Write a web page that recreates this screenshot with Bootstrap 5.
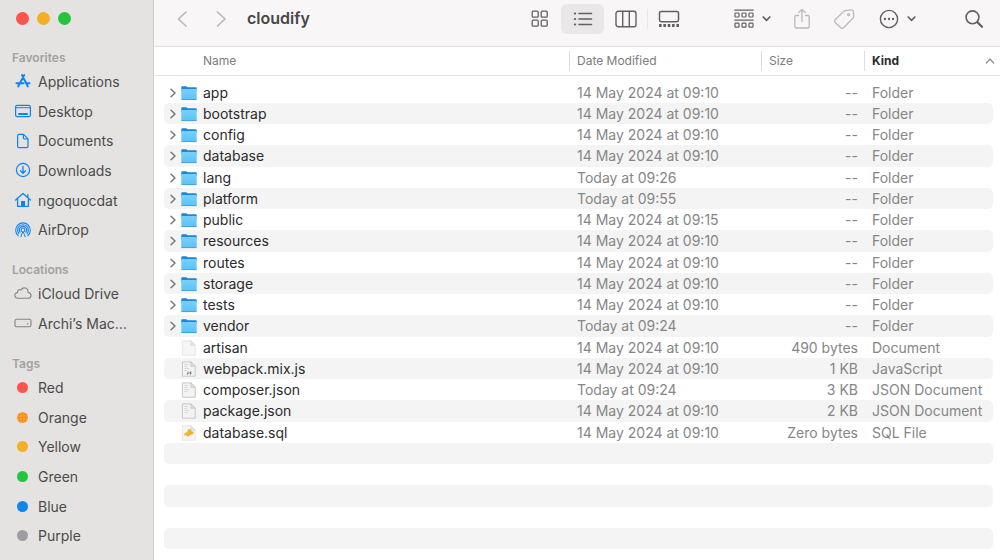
<!DOCTYPE html>
<html lang="en">
<head>
<meta charset="utf-8">
<meta name="viewport" content="width=device-width, initial-scale=1">
<title>cloudify</title>
<link href="https://cdn.jsdelivr.net/npm/bootstrap@5.3.0/dist/css/bootstrap.min.css" rel="stylesheet">
<style>
  body { font-family: Inter, "Liberation Sans", sans-serif; font-size: 14px; color: #2b2b2b; background: #fff; }
  svg { display: block; flex: none; fill: none; stroke: currentColor; stroke-linecap: round; stroke-linejoin: round; }

  /* Sidebar */
  .side { width: 154px; flex: none; background: #e4e3e2; border-right: 1px solid #cfcecd; }
  .lights { height: 32px; padding: 12px 0 0 16px; gap: 8px; }
  .light { width: 13px; height: 13px; border: 0; padding: 0; border-radius: 50%; }
  .side-title { font-size: 12px; font-weight: 600; line-height: 17px; padding: 17px 0 0 12px; margin: 0; color: #a2a1a0; }
  .side-link { height: 30px; gap: 6px; padding-left: 14px; color: #4b4b4a; text-decoration: none; white-space: nowrap; }
  li:nth-child(3n) > .side-link { height: 29px; }
  .side-link svg { width: 18px; height: 18px; color: #0d84f5; }
  .side-link svg.muted { color: #858584; }
  .dot { width: 11px; height: 11px; margin: 0 4px 0 3px; border-radius: 50%; }
  .c-red { background: #fd544c; } .c-amber { background: #f3b024; } .c-green { background: #26c33f; }
  .c-blue { background: #0f84ee; } .c-gray { background: #9f9da0; }
  .c-orange { background: #f58f22 radial-gradient(circle at 1px 1px, #f7a52c 1px, transparent 1px) 0 0 / 3px 3px; }

  /* Toolbar */
  .bar { height: 47px; padding: 0 16px 9px 22px; background: #f8f6f7; border-bottom: 1px solid #e3e1e2; }
  .tool { border: 0; padding: 0; background: none; color: #626162; border-radius: 6px; }
  .tool.dim { color: #b9b7b8; }
  .title { font-size: 16px; font-weight: 600; color: #474647; margin: 0 0 0 19px; }
  .view { width: 43px; height: 30px; }
  .view.on { background: #e9e7e7; }
  .divided { position: relative; }
  .divided::before { content: ""; position: absolute; left: 0; top: 5px; height: 20px; border-left: 1px solid #e8e6e7; }
  .views { margin-right: 24px; }
  .tools { gap: 20px; }
  .find { margin-left: 28px; }

  /* File list */
  .files { table-layout: fixed; border-collapse: separate; border-spacing: 0; color: #2b2b2b; white-space: nowrap; }
  .files > thead th { height: 29px; padding: 0; font-size: 12px; font-weight: 400; color: #7c7c7c; border-bottom: 1px solid #e4e4e4; background: none; vertical-align: middle; }
  .head { height: 20px; line-height: 20px; padding-left: 7px; border-left: 1px solid #dedede; }
  .head.first { border: 0; padding-left: 49px; }
  .head.sorted { font-weight: 700; color: #2b2b2b; padding-right: 5px; }
  .w-date { width: 192px; } .w-size { width: 103px; } .w-kind { width: 136px; }
  .files > tbody td { height: 21px; line-height: 21px; padding: 0 0 0 8px; color: #868686; background-clip: padding-box; background-color: transparent; border: 0; }
  .files > tbody tr:nth-child(4n) td { height: 22px; }
  .files > tbody tr:nth-child(even) td { background-color: #f4f4f4; }
  .files > tbody td:first-child { padding-left: 4px; color: #2b2b2b; border-left: 10px solid transparent; border-radius: 15px 0 0 15px / 5px 0 0 5px; }
  .files > tbody td:last-child { border-right: 7px solid transparent; border-radius: 0 12px 12px 0 / 0 5px 5px 0; }
  .files > tbody td:nth-child(3) { text-align: right; padding-right: 6px; }
  .file { gap: 6px; height: 21px; }
  .open { width: 10px; height: 16px; border: 0; padding: 0; margin-right: -3px; background: none; color: #777; }
  .file.leaf { padding-left: 13px; }
</style>
</head>
<body>
<svg width="0" height="0" class="position-absolute" aria-hidden="true">
  <defs>
    <linearGradient id="fold" x1="0" y1="0" x2="0" y2="1"><stop offset="0" stop-color="#77d0fb"/><stop offset="1" stop-color="#5fc1f5"/></linearGradient>
    <symbol id="i-folder" viewBox="0 0 16 16"><path d="M.3 2.2Q.3 1.2 1.2 1.2H5.3L6.6 2.3H15Q15.7 2.3 15.7 3V6H.3z" fill="#1b86dc" stroke="none"/><path d="M.3 4.1H15.7V14Q15.7 14.9 14.8 14.9H1.2Q.3 14.9.3 14z" fill="url(#fold)" stroke="none"/><path d="M.8 14.6H15.2" stroke="#379ad8" stroke-width=".8"/></symbol>
    <symbol id="i-doc" viewBox="0 0 16 16"><path d="M1.8.9H9.8L14.2 5.3V15.2H1.8z" fill="#f6f6f6" stroke="#dcdcdc" stroke-width=".7"/><path d="M9.8.9V5.3H14.2z" fill="#e4e4e4" stroke="#d4d4d4" stroke-width=".6"/></symbol>
    <symbol id="i-code" viewBox="0 0 16 16"><path d="M1.8.9H9.8L14.2 5.3V15.2H1.8z" fill="#f3f3f3" stroke="#bdbdbd" stroke-width=".8"/><path d="M9.8.9V5.3H14.2z" fill="#ddd" stroke="#bdbdbd" stroke-width=".6"/><path d="M3.6 3.5H7M3.6 5.5H6M3.6 7.5H8M3.6 9.5H6" stroke="#d2d2d2" stroke-width=".8"/></symbol>
    <symbol id="i-chev" viewBox="0 0 10 16"><path d="M3 4.2L7 8L3 11.8" stroke-width="1.5"/></symbol>
    <symbol id="i-down" viewBox="0 0 9 9"><path d="M1.2 3L4.5 6.3L7.8 3" stroke-width="1.7"/></symbol>
  </defs>
</svg>

<div class="d-flex vh-100 overflow-hidden">
  <nav class="side" aria-label="Sidebar">
    <div class="lights d-flex">
      <button class="light c-red" aria-label="Close"></button>
      <button class="light c-amber" aria-label="Minimise"></button>
      <button class="light c-green" aria-label="Zoom"></button>
    </div>
    <h2 class="side-title">Favorites</h2>
    <ul class="list-unstyled mb-0">
      <li><a href="#" class="side-link d-flex align-items-center"><svg viewBox="0 0 18 18"><path d="M8 3L13.8 14.5M10.2 3L4.2 14.5M2.4 11.3H9.6M12.8 11.3H15.6" stroke-width="1.9"/></svg>Applications</a></li>
      <li><a href="#" class="side-link d-flex align-items-center"><svg viewBox="0 0 18 18"><rect x="1.6" y="3.3" width="14.8" height="11.4" rx="1.6" stroke-width="1.2"/><path d="M1.6 5.7H16.4" stroke-width="1"/><rect x="4.2" y="11" width="9.6" height="2" fill="currentColor" stroke="none"/></svg>Desktop</a></li>
      <li><a href="#" class="side-link d-flex align-items-center"><svg viewBox="0 0 18 18"><path d="M5 2.3H9.6L14 6.8V14.3Q14 15.7 12.6 15.7H5Q3.6 15.7 3.6 14.3V3.7Q3.6 2.3 5 2.3zM9.4 2.5V5.8Q9.4 7 10.6 7H13.8" stroke-width="1.2"/></svg>Documents</a></li>
      <li><a href="#" class="side-link d-flex align-items-center"><svg viewBox="0 0 18 18"><circle cx="9" cy="9" r="6.6" stroke-width="1.2"/><path d="M9 5.5V12M6.5 9.8L9 12.2L11.5 9.8" stroke-width="1.3"/></svg>Downloads</a></li>
      <li><a href="#" class="side-link d-flex align-items-center"><svg viewBox="0 0 18 18"><path d="M1.6 9L9 2.5L16.4 9M3.6 8V15.3H14.4V8M13.8 6.3V3.6" stroke-width="1.3"/><path d="M7 15.3V10H11V15.3z" fill="currentColor" stroke="none"/></svg>ngoquocdat</a></li>
      <li><a href="#" class="side-link d-flex align-items-center"><svg viewBox="0 0 18 18" stroke-width="1.1"><path d="M4.2 14.7A7.3 7.3 0 1 1 13.8 14.7M4.9 12.6A5.4 5.4 0 1 1 13.1 12.6M6.1 11.2A3.6 3.6 0 1 1 11.9 11.2M7.6 10.3A1.9 1.9 0 1 1 10.4 10.3"/><path d="M6.8 15.8L9 10.2L11.2 15.8" stroke-width="1"/></svg>AirDrop</a></li>
    </ul>
    <h2 class="side-title">Locations</h2>
    <ul class="list-unstyled mb-0">
      <li><a href="#" class="side-link d-flex align-items-center"><svg class="muted" viewBox="0 0 18 18"><path d="M4.4 14.3C-.2 14.1-.2 8.9 3.5 8.6C3.2 6 6 5 7.1 6C9 2.2 14.4 3.8 14 8.4C18.1 9 17.8 14.1 14.2 14.3z" stroke-width="1.1"/></svg>iCloud Drive</a></li>
      <li><a href="#" class="side-link d-flex align-items-center"><svg class="muted" viewBox="0 0 18 18"><rect x="1" y="5.2" width="16" height="7.6" rx="1.8" stroke-width="1.1"/><circle cx="13.8" cy="9.8" r=".8" fill="currentColor" stroke="none"/></svg>Archi’s Mac…</a></li>
    </ul>
    <h2 class="side-title">Tags</h2>
    <ul class="list-unstyled mb-0">
      <li><a href="#" class="side-link d-flex align-items-center"><span class="dot c-red"></span>Red</a></li>
      <li><a href="#" class="side-link d-flex align-items-center"><span class="dot c-orange"></span>Orange</a></li>
      <li><a href="#" class="side-link d-flex align-items-center"><span class="dot c-amber"></span>Yellow</a></li>
      <li><a href="#" class="side-link d-flex align-items-center"><span class="dot c-green"></span>Green</a></li>
      <li><a href="#" class="side-link d-flex align-items-center"><span class="dot c-blue"></span>Blue</a></li>
      <li><a href="#" class="side-link d-flex align-items-center"><span class="dot c-gray"></span>Purple</a></li>
    </ul>
  </nav>

  <main class="flex-grow-1 overflow-hidden">
    <header class="bar d-flex align-items-center">
      <button class="tool dim" aria-label="Back"><svg width="14" height="18" viewBox="0 0 14 18"><path d="M10 2L2.5 9L10 16" stroke-width="1.7"/></svg></button>
      <button class="tool dim ms-4" aria-label="Forward"><svg width="14" height="18" viewBox="0 0 14 18"><path d="M3.5 2L11 9L3.5 16" stroke-width="1.7"/></svg></button>
      <h1 class="title">cloudify</h1>
      <div class="tools d-flex align-items-center ms-auto">
        <div class="views d-flex" role="group" aria-label="View">
          <button class="tool view d-flex align-items-center justify-content-center" aria-label="Icons"><svg width="18" height="18" viewBox="0 0 18 18" stroke-width="1.3"><rect x="1.2" y="1.2" width="6" height="6" rx="1"/><rect x="10.2" y="1.2" width="6" height="6" rx="1"/><rect x="1.2" y="10.2" width="6" height="6" rx="1"/><rect x="10.2" y="10.2" width="6" height="6" rx="1"/></svg></button>
          <button class="tool view on d-flex align-items-center justify-content-center" aria-label="List" aria-pressed="true"><svg width="20" height="16" viewBox="0 0 20 16" stroke-width="1.6"><path d="M6 2.5H18.5M6 8H18.5M6 13.5H18.5"/><path d="M1.9 2.5H2.1M1.9 8H2.1M1.9 13.5H2.1" stroke-width="2.2"/></svg></button>
          <button class="tool view d-flex align-items-center justify-content-center" aria-label="Columns"><svg width="22" height="18" viewBox="0 0 22 18" stroke-width="1.4"><rect x="1" y="1.3" width="20" height="15.4" rx="2.2"/><path d="M7.7 1.5V16.5M14.3 1.5V16.5"/></svg></button>
          <button class="tool view divided d-flex align-items-center justify-content-center" aria-label="Gallery"><svg width="22" height="18" viewBox="0 0 22 18" stroke-width="1.5"><rect x="1.5" y="1.5" width="19" height="10.2" rx="1.6"/><path d="M1 15.4H21" stroke-width="3" stroke-linecap="butt" stroke-dasharray="2.6 1.75"/></svg></button>
        </div>
        <button class="tool d-flex align-items-center gap-2" aria-label="Group"><svg width="20" height="20" viewBox="0 0 20 20" stroke-width="1.2"><path d="M.8 1.2H19.2M.8 11.1H19.2"/><rect x="1" y="4" width="4" height="4" rx=".8"/><rect x="8" y="4" width="4" height="4" rx=".8"/><rect x="15" y="4" width="4" height="4" rx=".8"/><rect x="1" y="14.2" width="4" height="4" rx=".8"/><rect x="8" y="14.2" width="4" height="4" rx=".8"/><rect x="15" y="14.2" width="4" height="4" rx=".8"/></svg><svg width="9" height="9"><use href="#i-down"/></svg></button>
        <button class="tool dim" aria-label="Share"><svg width="22" height="22" viewBox="0 0 22 22" stroke-width="1.3"><path d="M7.5 7.5H5.2Q3.8 7.5 3.8 8.9V18.6Q3.8 20 5.2 20H16.8Q18.2 20 18.2 18.6V8.9Q18.2 7.5 16.8 7.5H14.5M11 13.5V1.5M7.8 4.5L11 1.4L14.2 4.5"/></svg></button>
        <button class="tool dim" aria-label="Tags"><svg width="22" height="22" viewBox="0 0 22 22" stroke-width="1.3"><path d="M12.6 2.6L18 1.8Q20 1.6 20.4 3.6L20.6 8.4Q20.7 9.4 20 10.1L10.6 19.8Q9.2 21 7.8 19.8L2.2 14.6Q.9 13.2 2.1 11.8L10.8 3.4Q11.6 2.7 12.6 2.6z"/><circle cx="15.6" cy="6.6" r="1"/></svg></button>
        <button class="tool ms-1 d-flex align-items-center gap-2" aria-label="More"><svg width="20" height="20" viewBox="0 0 20 20"><circle cx="10" cy="10" r="8.6" stroke-width="1.4"/><path d="M5.9 10H6M10 10H10.1M14 10H14.1" stroke-width="2.3"/></svg><svg width="9" height="9"><use href="#i-down"/></svg></button>
        <button class="tool find" aria-label="Search"><svg width="20" height="20" viewBox="0 0 20 20"><circle cx="8.5" cy="8.3" r="6.4" stroke-width="1.6"/><path d="M13.4 13.2L18 17.8" stroke-width="2.2"/></svg></button>
      </div>
    </header>

    <table class="table files w-100 mb-0">
      <thead>
        <tr>
          <th scope="col"><div class="head first">Name</div></th>
          <th scope="col" class="w-date"><div class="head">Date Modified</div></th>
          <th scope="col" class="w-size"><div class="head">Size</div></th>
          <th scope="col" class="w-kind" aria-sort="ascending"><div class="head sorted d-flex justify-content-between align-items-center">Kind<svg width="10" height="8" viewBox="0 0 10 8" color="#8c8c8c"><path d="M1.3 6L5 2L8.7 6" stroke-width="1.2"/></svg></div></th>
        </tr>
        <tr aria-hidden="true"><td colspan="4" class="p-0 border-0" height="6"></td></tr>
      </thead>
      <tbody>
        <tr><td><div class="file d-flex align-items-center"><button class="open" aria-label="Expand app"><svg width="10" height="16"><use href="#i-chev"/></svg></button><svg width="16" height="16"><use href="#i-folder"/></svg>app</div></td><td>14 May 2024 at 09:10</td><td>--</td><td>Folder</td></tr>
        <tr><td><div class="file d-flex align-items-center"><button class="open" aria-label="Expand bootstrap"><svg width="10" height="16"><use href="#i-chev"/></svg></button><svg width="16" height="16"><use href="#i-folder"/></svg>bootstrap</div></td><td>14 May 2024 at 09:10</td><td>--</td><td>Folder</td></tr>
        <tr><td><div class="file d-flex align-items-center"><button class="open" aria-label="Expand config"><svg width="10" height="16"><use href="#i-chev"/></svg></button><svg width="16" height="16"><use href="#i-folder"/></svg>config</div></td><td>14 May 2024 at 09:10</td><td>--</td><td>Folder</td></tr>
        <tr><td><div class="file d-flex align-items-center"><button class="open" aria-label="Expand database"><svg width="10" height="16"><use href="#i-chev"/></svg></button><svg width="16" height="16"><use href="#i-folder"/></svg>database</div></td><td>14 May 2024 at 09:10</td><td>--</td><td>Folder</td></tr>
        <tr><td><div class="file d-flex align-items-center"><button class="open" aria-label="Expand lang"><svg width="10" height="16"><use href="#i-chev"/></svg></button><svg width="16" height="16"><use href="#i-folder"/></svg>lang</div></td><td>Today at 09:26</td><td>--</td><td>Folder</td></tr>
        <tr><td><div class="file d-flex align-items-center"><button class="open" aria-label="Expand platform"><svg width="10" height="16"><use href="#i-chev"/></svg></button><svg width="16" height="16"><use href="#i-folder"/></svg>platform</div></td><td>Today at 09:55</td><td>--</td><td>Folder</td></tr>
        <tr><td><div class="file d-flex align-items-center"><button class="open" aria-label="Expand public"><svg width="10" height="16"><use href="#i-chev"/></svg></button><svg width="16" height="16"><use href="#i-folder"/></svg>public</div></td><td>14 May 2024 at 09:15</td><td>--</td><td>Folder</td></tr>
        <tr><td><div class="file d-flex align-items-center"><button class="open" aria-label="Expand resources"><svg width="10" height="16"><use href="#i-chev"/></svg></button><svg width="16" height="16"><use href="#i-folder"/></svg>resources</div></td><td>14 May 2024 at 09:10</td><td>--</td><td>Folder</td></tr>
        <tr><td><div class="file d-flex align-items-center"><button class="open" aria-label="Expand routes"><svg width="10" height="16"><use href="#i-chev"/></svg></button><svg width="16" height="16"><use href="#i-folder"/></svg>routes</div></td><td>14 May 2024 at 09:10</td><td>--</td><td>Folder</td></tr>
        <tr><td><div class="file d-flex align-items-center"><button class="open" aria-label="Expand storage"><svg width="10" height="16"><use href="#i-chev"/></svg></button><svg width="16" height="16"><use href="#i-folder"/></svg>storage</div></td><td>14 May 2024 at 09:10</td><td>--</td><td>Folder</td></tr>
        <tr><td><div class="file d-flex align-items-center"><button class="open" aria-label="Expand tests"><svg width="10" height="16"><use href="#i-chev"/></svg></button><svg width="16" height="16"><use href="#i-folder"/></svg>tests</div></td><td>14 May 2024 at 09:10</td><td>--</td><td>Folder</td></tr>
        <tr><td><div class="file d-flex align-items-center"><button class="open" aria-label="Expand vendor"><svg width="10" height="16"><use href="#i-chev"/></svg></button><svg width="16" height="16"><use href="#i-folder"/></svg>vendor</div></td><td>Today at 09:24</td><td>--</td><td>Folder</td></tr>
        <tr><td><div class="file leaf d-flex align-items-center"><svg width="16" height="16"><use href="#i-doc"/></svg>artisan</div></td><td>14 May 2024 at 09:10</td><td>490 bytes</td><td>Document</td></tr>
        <tr><td><div class="file leaf d-flex align-items-center"><svg width="16" height="16" viewBox="0 0 16 16"><use href="#i-code"/><path d="M7 11V13H6.2M10 11H9V12H10V13H9" stroke="#666" stroke-width=".9"/></svg>webpack.mix.js</div></td><td>14 May 2024 at 09:10</td><td>1 KB</td><td>JavaScript</td></tr>
        <tr><td><div class="file leaf d-flex align-items-center"><svg width="16" height="16"><use href="#i-code"/></svg>composer.json</div></td><td>Today at 09:24</td><td>3 KB</td><td>JSON Document</td></tr>
        <tr><td><div class="file leaf d-flex align-items-center"><svg width="16" height="16"><use href="#i-code"/></svg>package.json</div></td><td>14 May 2024 at 09:10</td><td>2 KB</td><td>JSON Document</td></tr>
        <tr><td><div class="file leaf d-flex align-items-center"><svg width="16" height="16" viewBox="0 0 16 16"><use href="#i-doc"/><path d="M3.8 8.6L6.6 7L7.4 4.6L9.4 4.4L10 6L12.4 7.2L11.6 9.2L9.6 9.4L6.8 11.4L5.8 10L3.8 10.2z" fill="#f5b02a" stroke="#f5b02a" stroke-width=".6"/></svg>database.sql</div></td><td>14 May 2024 at 09:10</td><td>Zero bytes</td><td>SQL File</td></tr>
        <tr><td></td><td></td><td></td><td></td></tr>
        <tr><td></td><td></td><td></td><td></td></tr>
        <tr><td></td><td></td><td></td><td></td></tr>
        <tr><td></td><td></td><td></td><td></td></tr>
        <tr><td></td><td></td><td></td><td></td></tr>
      </tbody>
    </table>
  </main>
</div>
<script src="https://cdn.jsdelivr.net/npm/bootstrap@5.3.0/dist/js/bootstrap.bundle.min.js"></script>
</body>
</html>
